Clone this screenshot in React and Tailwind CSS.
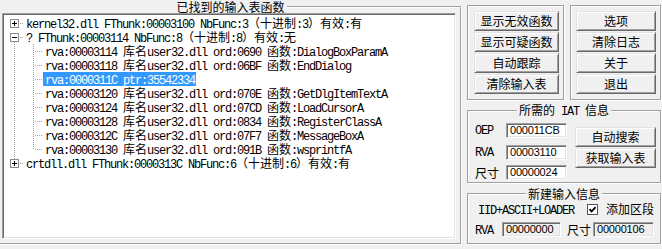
import React from "react";

const MONO = "font-['Liberation_Mono',monospace] text-[12px] tracking-[-1.2px]";
const CJK = "font-['Noto_Sans_CJK_SC',sans-serif] text-[12px] tracking-normal";

function T({ s, className = "" }) {
  const parts = s.match(/[\x00-\x7f]+|[^\x00-\x7f]+/g) || [];
  return (
    <span className={"whitespace-pre " + className}>
      {parts.map((p, i) => (
        <span key={i} className={/^[\x00-\x7f]/.test(p) ? MONO : CJK}>
          {p}
        </span>
      ))}
    </span>
  );
}

function dotsH(x1, x2, y, key) {
  const out = [];
  for (let x = x1; x <= x2; x += 2) out.push(<rect key={key + "h" + x} x={x} y={y} width="1" height="1" />);
  return out;
}
function dotsV(x, y1, y2, key) {
  const out = [];
  for (let y = y1; y <= y2; y += 2) out.push(<rect key={key + "v" + y} x={x} y={y} width="1" height="1" />);
  return out;
}

function Box({ open }) {
  return (
    <g>
      <rect x="6.5" y="3.5" width="8" height="8" fill="white" stroke="#8c8c8c" />
      <rect x="8" y="7" width="5" height="1" fill="black" />
      {!open && <rect x="10" y="5" width="1" height="5" fill="black" />}
    </g>
  );
}

function Gutter({ type }) {
  const child = type === "child" || type === "childLast";
  const w = child ? 39 : 20;
  return (
    <svg width={w} height="14" className="shrink-0 block" shapeRendering="crispEdges">
      <g fill="#a0a0a0">
        {type === "rootOpen" && dotsV(10, 12, 13, "a")}
        {type === "rootLast" && dotsV(10, 0, 2, "b")}
        {child && dotsV(10, 0, 13, "c")}
        {type === "child" && dotsV(29, 0, 13, "d")}
        {type === "childLast" && dotsV(29, 0, 7, "e")}
        {child && dotsH(31, 37, 7, "f")}
        {!child && dotsH(16, 18, 7, "g")}
      </g>
      {type === "rootClosed" && <Box open={false} />}
      {type === "rootLast" && <Box open={false} />}
      {type === "rootOpen" && <Box open={true} />}
    </svg>
  );
}

const rows = [
  { type: "rootClosed", text: "kernel32.dll FThunk:00003100 NbFunc:3（十进制:3）有效:有" },
  { type: "rootOpen", text: "? FThunk:00003114 NbFunc:8（十进制:8）有效:无" },
  { type: "child", text: "rva:00003114 库名user32.dll ord:0690 函数:DialogBoxParamA" },
  { type: "child", text: "rva:00003118 库名user32.dll ord:06BF 函数:EndDialog" },
  { type: "child", text: "rva:0000311C ptr:35542334", sel: true },
  { type: "child", text: "rva:00003120 库名user32.dll ord:070E 函数:GetDlgItemTextA" },
  { type: "child", text: "rva:00003124 库名user32.dll ord:07CD 函数:LoadCursorA" },
  { type: "child", text: "rva:00003128 库名user32.dll ord:0834 函数:RegisterClassA" },
  { type: "child", text: "rva:0000312C 库名user32.dll ord:07F7 函数:MessageBoxA" },
  { type: "childLast", text: "rva:00003130 库名user32.dll ord:091B 函数:wsprintfA" },
  { type: "rootLast", text: "crtdll.dll FThunk:0000313C NbFunc:6（十进制:6）有效:有" },
];

function Tree() {
  return (
    <div className="w-[454px] h-[226px] bg-white border border-t-[#a0a0a0] border-l-[#a0a0a0] border-b-white border-r-white shadow-[inset_1px_1px_0_#696969,inset_-1px_-1px_0_#e3e3e3] pl-[1px] pt-[2px] flex flex-col">
      {rows.map((r, i) => (
        <div key={i} className="h-[14px] flex items-center overflow-visible">
          <Gutter type={r.type} />
          <div
            className={
              r.sel
                ? "h-[14px] pl-[2px] pr-px bg-[#3399ff] text-white leading-[14px] flex items-center"
                : "h-[14px] pl-[2px] pr-px text-black leading-[14px] flex items-center"
            }
          >
            <T s={r.text} className="leading-[14px]" />
          </div>
        </div>
      ))}
    </div>
  );
}

const ETCH = "border border-[#a0a0a0] shadow-[inset_1px_1px_0_white,1px_1px_0_white]";

function Btn({ children, w }) {
  return (
    <div
      className={
        "h-[20px] flex items-center justify-center bg-[#f0f0f0] border border-t-[#e3e3e3] border-l-[#e3e3e3] border-b-[#696969] border-r-[#696969] shadow-[inset_1px_1px_0_white,inset_-1px_-1px_0_#a0a0a0] " +
        w
      }
    >
      <span className={CJK + " leading-none text-black"}>{children}</span>
    </div>
  );
}

function Input({ value, w, disabled }) {
  return (
    <div
      className={
        "h-[15px] border border-t-[#a0a0a0] border-l-[#a0a0a0] border-b-white border-r-white shadow-[inset_1px_1px_0_#696969,inset_-1px_-1px_0_#e3e3e3] pl-[3px] flex items-center font-['Liberation_Sans',sans-serif] text-[11px] tracking-[-0.2px] leading-none text-black " +
        (disabled ? "bg-[#f0f0f0] " : "bg-white ") +
        w
      }
    >
      {value}
    </div>
  );
}

function GroupTitle({ s }) {
  return (
    <div className="-mt-[7px] h-[13px] flex justify-center">
      <span className="bg-[#f0f0f0] px-[2px] leading-[13px] h-[13px] flex items-center">
        <T s={s} className="leading-[13px]" />
      </span>
    </div>
  );
}

export default function App() {
  return (
    <div className="w-[662px] h-[249px] bg-[#f0f0f0] flex overflow-hidden text-black select-none">
      {/* left group */}
      <div className="w-[461px] flex flex-col shrink-0">
        <div className="h-[13px] grid grid-cols-[1fr_auto_1fr]">
          <div />
          <div className="px-[2px] h-[13px] leading-[13px] flex items-center">
            <T s="已找到的输入表函数" className="leading-[13px]" />
          </div>
          <div className="mt-[6px] border-t border-r border-[#a0a0a0] shadow-[inset_0_1px_0_white,1px_0_0_white]" />
        </div>
        <div className="h-[231px] border-r border-b border-[#a0a0a0] shadow-[1px_1px_0_white] pl-[2px] pr-[4px] pb-[4px]">
          <Tree />
        </div>
      </div>

      {/* right column */}
      <div className="ml-[6px] w-[194px] flex flex-col shrink-0">
        <div className="mt-[5px] h-[95px] flex gap-[6px]">
          <div className={"w-[97px] pl-[6px] pt-[5px] flex flex-col gap-px " + ETCH}>
            <Btn w="w-[85px]">显示无效函数</Btn>
            <Btn w="w-[85px]">显示可疑函数</Btn>
            <Btn w="w-[85px]">自动跟踪</Btn>
            <Btn w="w-[85px]">清除输入表</Btn>
          </div>
          <div className={"w-[91px] pl-[5px] pt-[5px] flex flex-col gap-px " + ETCH}>
            <Btn w="w-[80px]">选项</Btn>
            <Btn w="w-[80px]">清除日志</Btn>
            <Btn w="w-[80px]">关于</Btn>
            <Btn w="w-[80px]">退出</Btn>
          </div>
        </div>

        <div className={"mt-[10px] h-[73px] flex flex-col " + ETCH}>
          <GroupTitle s="所需的 IAT 信息" />
          <div className="mt-[4px] flex pl-[7px]">
            <div className="grid grid-cols-[31px_61px] gap-y-[4px] items-center">
              <T s="OEP" className="leading-[15px]" />
              <Input value="000011CB" w="w-[61px]" />
              <T s="RVA" className="leading-[15px]" />
              <Input value="00003110" w="w-[61px]" />
              <T s="尺寸" className="leading-[15px]" />
              <Input value="00000024" w="w-[61px]" />
            </div>
            <div className="ml-[8px] mt-[6px] flex flex-col gap-px">
              <Btn w="w-[81px]">自动搜索</Btn>
              <Btn w="w-[81px]">获取输入表</Btn>
            </div>
          </div>
        </div>

        <div className={"mt-[10px] h-[51px] flex flex-col " + ETCH}>
          <GroupTitle s="新建输入信息" />
          <div className="mt-[2px] h-[14px] flex items-center pl-[10px]">
            <T s="IID+ASCII+LOADER" className="leading-[14px]" />
            <div className="ml-[13px] w-[11px] h-[11px] bg-white border border-[#555] flex items-center justify-center">
              <svg width="9" height="9" viewBox="0 0 9 9" className="block">
                <path d="M1.5 4.2 L3.6 6.4 L7.6 2.2" stroke="black" strokeWidth="1.8" fill="none" />
              </svg>
            </div>
            <span className={CJK + " ml-[8px] leading-[14px]"}>添加区段</span>
          </div>
          <div className="mt-[6px] h-[15px] flex items-center pl-[7px]">
            <T s="RVA" className="leading-[15px]" />
            <div className="ml-[9px]">
              <Input value="00000000" w="w-[59px]" disabled />
            </div>
            <span className={CJK + " ml-[6px] leading-[15px]"}>尺寸</span>
            <div className="ml-[2px]">
              <Input value="00000106" w="w-[61px]" disabled />
            </div>
          </div>
        </div>
      </div>
    </div>
  );
}
